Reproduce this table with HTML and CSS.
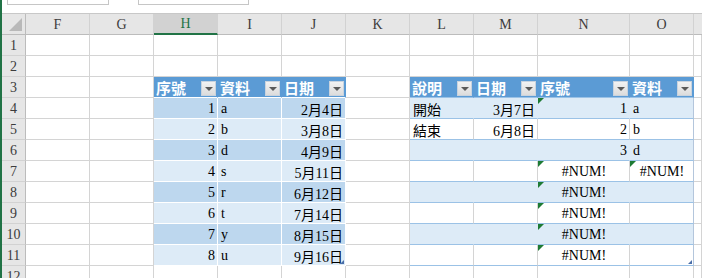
FILE: index.html
```html
<!DOCTYPE html>
<html lang="zh-Hant">
<head>
<meta charset="utf-8">
<title>Sheet</title>
<link rel="stylesheet" href="styles.css">
</head>
<body>
<div class="app">
  <div class="topbar">
    <div class="box b1"></div>
    <div class="box b2"></div>
  </div>
  <div class="sheet">
    <!-- header row -->
    <div class="corner"><span class="tri"></span></div>
    <div class="ch">F</div><div class="ch">G</div><div class="ch sel">H</div><div class="ch">I</div><div class="ch">J</div><div class="ch">K</div><div class="ch">L</div><div class="ch">M</div><div class="ch">N</div><div class="ch">O</div><div class="ch last"></div>

    <!-- row 1 -->
    <div class="rh">1</div>
    <div class="c"></div><div class="c"></div><div class="c"></div><div class="c"></div><div class="c"></div><div class="c"></div><div class="c"></div><div class="c"></div><div class="c"></div><div class="c"></div><div class="c"></div>

    <!-- row 2 -->
    <div class="rh">2</div>
    <div class="c"></div><div class="c"></div><div class="c"></div><div class="c"></div><div class="c"></div><div class="c"></div><div class="c"></div><div class="c"></div><div class="c"></div><div class="c"></div><div class="c"></div>

    <!-- row 3 -->
    <div class="rh">3</div>
    <div class="c"></div><div class="c"></div>
    <div class="c th lth"><span>序號</span><span class="dd"></span></div>
    <div class="c th lth"><span>資料</span><span class="dd"></span></div>
    <div class="c th lth"><span>日期</span><span class="dd"></span></div>
    <div class="c"></div>
    <div class="c th rth"><span>說明</span><span class="dd"></span></div>
    <div class="c th rth"><span>日期</span><span class="dd"></span></div>
    <div class="c th rth"><span>序號</span><span class="dd"></span></div>
    <div class="c th rth redge"><span>資料</span><span class="dd"></span></div>
    <div class="c"></div>

    <!-- row 4 -->
    <div class="rh">4</div>
    <div class="c"></div><div class="c"></div>
    <div class="c lt dk r">1</div><div class="c lt dk">a</div><div class="c lt dk r">2月4日</div>
    <div class="c"></div>
    <div class="c rt band">開始</div><div class="c rt band r">3月7日</div><div class="c rt band r err">1</div><div class="c rt band redge">a</div>
    <div class="c"></div>

    <!-- row 5 -->
    <div class="rh">5</div>
    <div class="c"></div><div class="c"></div>
    <div class="c lt lg r">2</div><div class="c lt lg">b</div><div class="c lt lg r">3月8日</div>
    <div class="c"></div>
    <div class="c rt">結束</div><div class="c rt r">6月8日</div><div class="c rt r">2</div><div class="c rt redge">b</div>
    <div class="c"></div>

    <!-- row 6 -->
    <div class="rh">6</div>
    <div class="c"></div><div class="c"></div>
    <div class="c lt dk r">3</div><div class="c lt dk">d</div><div class="c lt dk r">4月9日</div>
    <div class="c"></div>
    <div class="c rt band"></div><div class="c rt band"></div><div class="c rt band r">3</div><div class="c rt band redge">d</div>
    <div class="c"></div>

    <!-- row 7 -->
    <div class="rh">7</div>
    <div class="c"></div><div class="c"></div>
    <div class="c lt lg r">4</div><div class="c lt lg">s</div><div class="c lt lg r">5月11日</div>
    <div class="c"></div>
    <div class="c rt"></div><div class="c rt"></div><div class="c rt ctr err">#NUM!</div><div class="c rt ctr err redge">#NUM!</div>
    <div class="c"></div>

    <!-- row 8 -->
    <div class="rh">8</div>
    <div class="c"></div><div class="c"></div>
    <div class="c lt dk r">5</div><div class="c lt dk">r</div><div class="c lt dk r">6月12日</div>
    <div class="c"></div>
    <div class="c rt band"></div><div class="c rt band"></div><div class="c rt band ctr err">#NUM!</div><div class="c rt band redge"></div>
    <div class="c"></div>

    <!-- row 9 -->
    <div class="rh">9</div>
    <div class="c"></div><div class="c"></div>
    <div class="c lt lg r">6</div><div class="c lt lg">t</div><div class="c lt lg r">7月14日</div>
    <div class="c"></div>
    <div class="c rt"></div><div class="c rt"></div><div class="c rt ctr err">#NUM!</div><div class="c rt redge"></div>
    <div class="c"></div>

    <!-- row 10 -->
    <div class="rh">10</div>
    <div class="c"></div><div class="c"></div>
    <div class="c lt dk r">7</div><div class="c lt dk">y</div><div class="c lt dk r">8月15日</div>
    <div class="c"></div>
    <div class="c rt band"></div><div class="c rt band"></div><div class="c rt band ctr err">#NUM!</div><div class="c rt band redge"></div>
    <div class="c"></div>

    <!-- row 11 -->
    <div class="rh">11</div>
    <div class="c"></div><div class="c"></div>
    <div class="c lt lg r">8</div><div class="c lt lg">u</div><div class="c lt lg r rz">9月16日</div>
    <div class="c"></div>
    <div class="c rt"></div><div class="c rt"></div><div class="c rt ctr err">#NUM!</div><div class="c rt redge rz"></div>
    <div class="c"></div>

    <!-- row 12 -->
    <div class="rh">12</div>
    <div class="c"></div><div class="c"></div><div class="c"></div><div class="c"></div><div class="c"></div><div class="c"></div><div class="c"></div><div class="c"></div><div class="c"></div><div class="c"></div><div class="c"></div>
  </div>
</div>
</body>
</html>
```

FILE: styles.css
```css
* { box-sizing: border-box; }

html, body {
  margin: 0;
  padding: 0;
  width: 702px;
  height: 278px;
  overflow: hidden;
  background: #ffffff;
}

.app {
  width: 702px;
  height: 278px;
  border-left: 2px solid #217346;
  font-family: "Liberation Serif", "Noto Sans CJK TC", serif;
  font-size: 14px;
  color: #000;
  overflow: hidden;
}

.topbar {
  height: 14px;
  display: flex;
  background: #ffffff;
  border-bottom: 1px solid #c8c8c8;
}

.box {
  height: 5px;
  background: #fff;
  border-right: 1px solid #c6c6c6;
  border-bottom: 1px solid #c6c6c6;
  border-left: 1px solid #c6c6c6;
}

.b1 { margin-left: 5px; width: 102px; }
.b2 { margin-left: 29px; width: 111px; }

.sheet {
  display: grid;
  grid-template-columns: 24px repeat(8, 64px) 92px 64px 1fr;
  grid-template-rows: 21px repeat(12, 21px);
}

.corner {
  background: #e6e6e6;
  border-right: 1px solid #bcbcbc;
  border-bottom: 1px solid #bcbcbc;
  position: relative;
}

.corner .tri {
  position: absolute;
  right: 3px;
  bottom: 3px;
  width: 0;
  height: 0;
  border-left: 13px solid transparent;
  border-bottom: 13px solid #b9b9b9;
}

.ch {
  background: #e6e6e6;
  border-bottom: 1px solid #bcbcbc;
  border-right: 1px solid #d2d2d2;
  display: flex;
  align-items: center;
  justify-content: center;
  color: #3c3c3c;
  font-size: 14px;
  padding-top: 1px;
}

.ch.sel {
  background: #d2d2d2;
  color: #217346;
  border-bottom: 2px solid #217346;
}

.ch.last { border-right: none; }

.rh {
  background: #e6e6e6;
  border-right: 1px solid #bcbcbc;
  border-bottom: 1px solid #d2d2d2;
  display: flex;
  align-items: center;
  justify-content: center;
  color: #3c3c3c;
  font-size: 14px;
  padding-top: 1px;
}

.c {
  border-right: 1px solid #d4d4d4;
  border-bottom: 1px solid #d4d4d4;
  display: flex;
  align-items: center;
  padding: 1px 2px 0 3px;
  white-space: nowrap;
  overflow: hidden;
  position: relative;
}

.r { justify-content: flex-end; }
.ctr { justify-content: center; }

/* table headers */
.th {
  background: #5b9bd5;
  color: #ffffff;
  font-weight: bold;
  font-size: 15px;
  justify-content: space-between;
  padding: 0 1px 0 2px;
}

.lth {
  border-right-color: #5b9bd5;
  border-bottom-color: #ffffff;
}

.rth {
  border-right-color: #5b9bd5;
  border-bottom-color: #9bc2e6;
}

.dd {
  width: 15px;
  height: 15px;
  margin-top: 2px;
  background: linear-gradient(#f2f2f2, #dcdcdc);
  border: 1px solid #c9d3de;
  display: flex;
  align-items: center;
  justify-content: center;
}

.dd::after {
  content: "";
  width: 0;
  height: 0;
  border-left: 4px solid transparent;
  border-right: 4px solid transparent;
  border-top: 4px solid #5a5a5a;
  margin-top: 1px;
}

/* left table (banded, white borders) */
.lt {
  border-right-color: #ffffff;
  border-bottom-color: #ffffff;
}
.lt.dk { background: #bdd7ee; }
.lt.lg { background: #ddebf7; }

/* right table */
.rt { border-bottom-color: #9bc2e6; }
.rt.band {
  background: #ddebf7;
  border-right-color: #ddebf7;
}
.rt.redge { border-right-color: #b4c6dc; }

/* error indicator */
.err::before {
  content: "";
  position: absolute;
  top: 0;
  left: 0;
  width: 0;
  height: 0;
  border-top: 6px solid #1e7b34;
  border-right: 6px solid transparent;
}

/* table resize handle */
.rz::after {
  content: "";
  position: absolute;
  right: 1px;
  bottom: 1px;
  width: 0;
  height: 0;
  border-left: 4px solid transparent;
  border-bottom: 4px solid #4a6ea8;
}
```
